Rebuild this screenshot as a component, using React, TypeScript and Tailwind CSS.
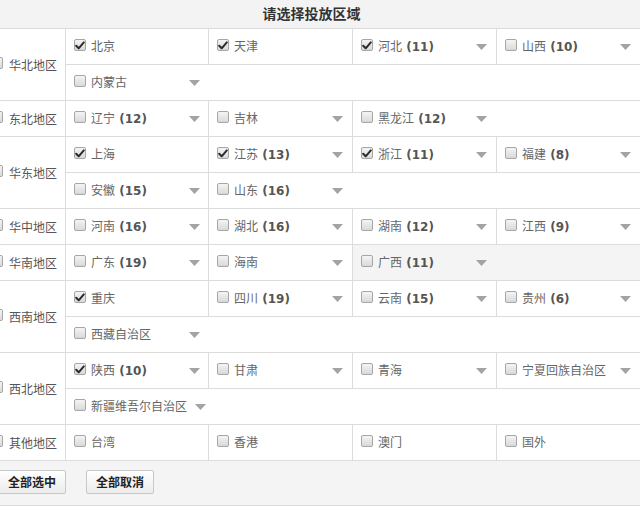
import React from "react";

type Item = { name: string; count?: number; checked?: boolean; arrow?: boolean; hover?: boolean };
type Group = { label: string; rows: Item[][] };

const groups: Group[] = [
  {
    label: "华北地区",
    rows: [
      [
        { name: "北京", checked: true },
        { name: "天津", checked: true },
        { name: "河北", count: 11, checked: true, arrow: true },
        { name: "山西", count: 10, arrow: true },
      ],
      [{ name: "内蒙古", arrow: true }],
    ],
  },
  {
    label: "东北地区",
    rows: [
      [
        { name: "辽宁", count: 12, arrow: true },
        { name: "吉林", arrow: true },
        { name: "黑龙江", count: 12, arrow: true },
      ],
    ],
  },
  {
    label: "华东地区",
    rows: [
      [
        { name: "上海", checked: true },
        { name: "江苏", count: 13, checked: true, arrow: true },
        { name: "浙江", count: 11, checked: true, arrow: true },
        { name: "福建", count: 8, arrow: true },
      ],
      [
        { name: "安徽", count: 15, arrow: true },
        { name: "山东", count: 16, arrow: true },
      ],
    ],
  },
  {
    label: "华中地区",
    rows: [
      [
        { name: "河南", count: 16, arrow: true },
        { name: "湖北", count: 16, arrow: true },
        { name: "湖南", count: 12, arrow: true },
        { name: "江西", count: 9, arrow: true },
      ],
    ],
  },
  {
    label: "华南地区",
    rows: [
      [
        { name: "广东", count: 19, arrow: true },
        { name: "海南", arrow: true },
        { name: "广西", count: 11, arrow: true, hover: true },
      ],
    ],
  },
  {
    label: "西南地区",
    rows: [
      [
        { name: "重庆", checked: true },
        { name: "四川", count: 19, arrow: true },
        { name: "云南", count: 15, arrow: true },
        { name: "贵州", count: 6, arrow: true },
      ],
      [{ name: "西藏自治区", arrow: true }],
    ],
  },
  {
    label: "西北地区",
    rows: [
      [
        { name: "陕西", count: 10, checked: true, arrow: true },
        { name: "甘肃", arrow: true },
        { name: "青海", arrow: true },
        { name: "宁夏回族自治区", arrow: true },
      ],
      [{ name: "新疆维吾尔自治区", arrow: true }],
    ],
  },
  {
    label: "其他地区",
    rows: [
      [
        { name: "台湾" },
        { name: "香港" },
        { name: "澳门" },
        { name: "国外" },
      ],
    ],
  },
];

function Box({ checked }: { checked?: boolean }) {
  return (
    <span className="mb-[3px] flex h-[12px] w-[12px] shrink-0 items-center justify-center rounded-[2px] border border-[#a6a6a6] bg-gradient-to-b from-[#f4f4f4] to-[#d9d9d9]">
      {checked && (
        <svg width="10" height="9" viewBox="0 0 10 9">
          <path d="M1.2 4.8 L3.7 7.3 L8.8 1.4" fill="none" stroke="#2b2b2b" strokeWidth="2" strokeLinecap="round" strokeLinejoin="round" />
        </svg>
      )}
    </span>
  );
}

function Arrow() {
  return (
    <svg width="11" height="6" viewBox="0 0 11 6" className="ml-[3px] shrink-0">
      <path d="M0 0 H11 L5.5 6 Z" fill="#a3a3a3" />
    </svg>
  );
}

function Cell({ item, first }: { item: Item; first: boolean }) {
  const width = item.hover ? "flex-1" : first ? "w-[143px]" : "w-[144px]";
  return (
    <div
      className={`flex h-full shrink-0 items-center gap-[5px] border-l border-[#dcdcdc] pl-[8px] ${width} ${
        item.hover ? "bg-[#f4f4f4]" : ""
      }`}
    >
      <Box checked={item.checked} />
      <span className="min-w-[90px] whitespace-nowrap text-[12px] text-[#666]">
        {item.name}
        {item.count !== undefined && <b className="font-bold text-[#555]"> ({item.count})</b>}
      </span>
      {item.arrow && <Arrow />}
    </div>
  );
}

export default function App() {
  return (
    <div
      className="h-[509px] w-[640px] overflow-hidden bg-white"
      style={{ fontFamily: '"DejaVu Sans", "Noto Sans CJK SC", sans-serif' }}
    >
      <div className="ml-[-14px] w-[654px]">
        <div className="flex h-[29px] items-center justify-center border-b border-[#dcdcdc] bg-[#f3f3f3] pr-[3px] pb-[2px]">
          <span className="text-[14px] font-bold text-[#333]" style={{ fontFamily: '"Noto Sans CJK SC", sans-serif' }}>
            请选择投放区域
          </span>
        </div>
        {groups.map((g) => (
          <div key={g.label} className="flex border-b border-[#dcdcdc]">
            <div className="flex w-[79px] shrink-0 items-center gap-[6px] pl-[5px]">
              <Box />
              <span className="text-[12px] text-[#555]" style={{ fontFamily: '"Noto Sans CJK SC", sans-serif' }}>
                {g.label}
              </span>
            </div>
            <div className="flex-1">
              {g.rows.map((row, ri) => (
                <div
                  key={ri}
                  className={`flex h-[35px] items-center ${ri < g.rows.length - 1 ? "h-[36px] border-b border-[#dcdcdc]" : ""}`}
                >
                  {row.map((it, ci) => (
                    <Cell key={it.name} item={it} first={ci === 0} />
                  ))}
                </div>
              ))}
            </div>
          </div>
        ))}
        <div className="flex h-[45px] gap-[20px] border-b border-[#dcdcdc] bg-[#f4f4f4] pl-[12px] pt-[9px]">
          <button className="h-[24px] rounded-[2px] border border-[#c8c8c8] bg-gradient-to-b from-white to-[#ececec] px-[9px] text-[12px] font-bold text-[#222]" style={{ fontFamily: '"Noto Sans CJK SC", sans-serif' }}>
            全部选中
          </button>
          <button className="h-[24px] rounded-[2px] border border-[#c8c8c8] bg-gradient-to-b from-white to-[#ececec] px-[9px] text-[12px] font-bold text-[#222]" style={{ fontFamily: '"Noto Sans CJK SC", sans-serif' }}>
            全部取消
          </button>
        </div>
      </div>
    </div>
  );
}
